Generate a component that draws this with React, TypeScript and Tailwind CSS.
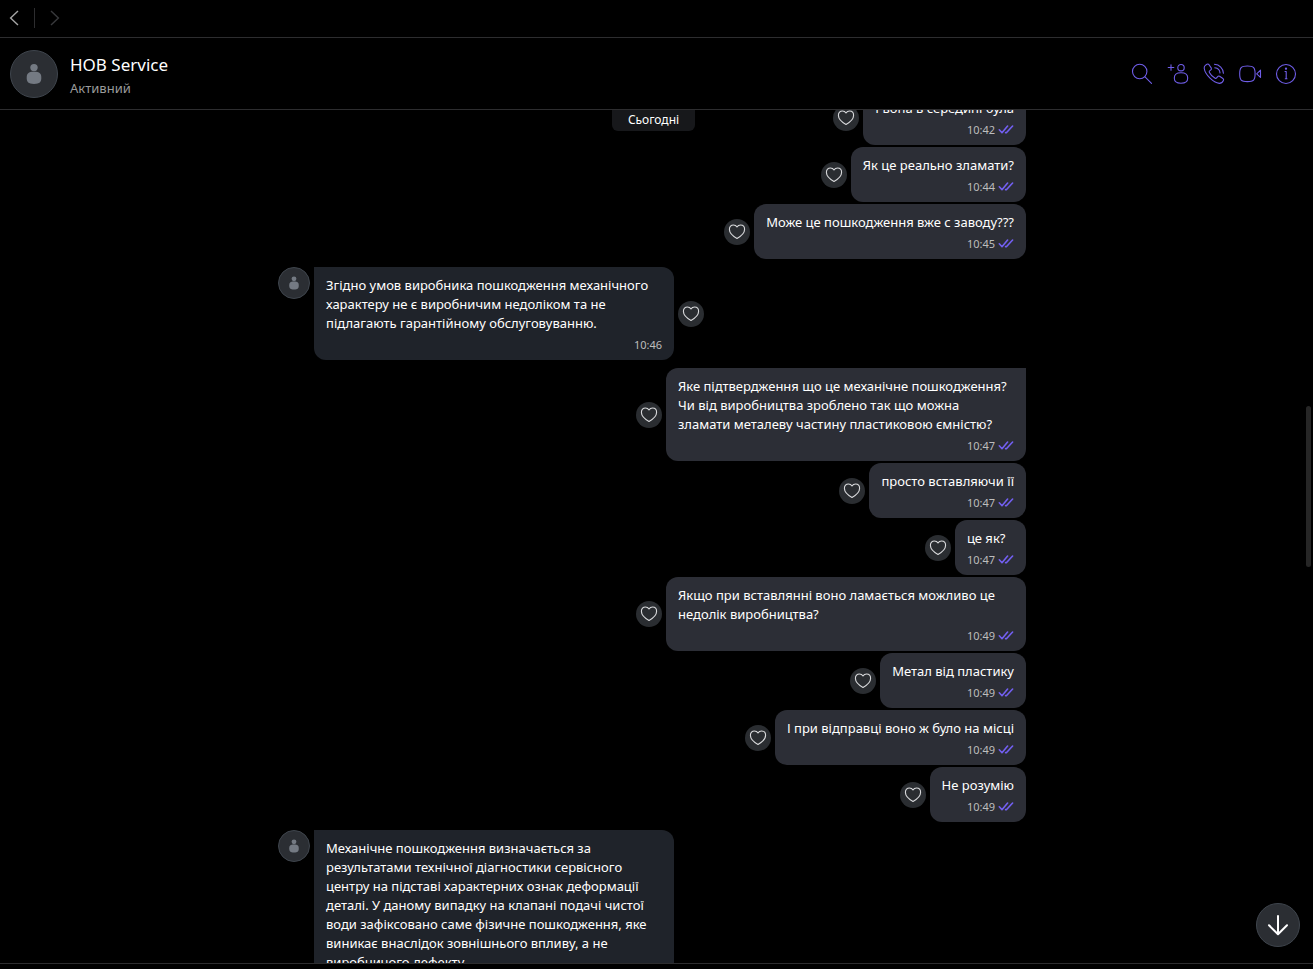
import React from 'react';

type Message = {
  id: number;
  text: string;
  time?: string;
};

type Group = {
  id: number;
  incoming?: boolean;
  tail?: boolean;
  messages: Message[];
};

const groups: Group[] = [
  {
    id: 1,
    messages: [
      { id: 1, text: 'І вона в середині була', time: '10:42' },
      { id: 2, text: 'Як це реально зламати?', time: '10:44' },
      { id: 3, text: 'Може це пошкодження вже с заводу???', time: '10:45' },
    ],
  },
  {
    id: 2,
    incoming: true,
    tail: true,
    messages: [
      {
        id: 4,
        text: 'Згідно умов виробника пошкодження механічного\nхарактеру не є виробничим недоліком та не\nпідлагають гарантійному обслуговуванню.',
        time: '10:46',
      },
    ],
  },
  {
    id: 3,
    tail: true,
    messages: [
      {
        id: 5,
        text: 'Яке підтвердження що це механічне пошкодження?\nЧи від виробництва зроблено так що можна\nзламати металеву частину пластиковою ємністю?',
        time: '10:47',
      },
      { id: 6, text: 'просто вставляючи її', time: '10:47' },
      { id: 7, text: 'це як?', time: '10:47' },
      { id: 8, text: 'Якщо при вставлянні воно ламається можливо це\nнедолік виробництва?', time: '10:49' },
      { id: 9, text: 'Метал від пластику', time: '10:49' },
      { id: 10, text: 'І при відправці воно ж було на місці', time: '10:49' },
      { id: 11, text: 'Не розумію', time: '10:49' },
    ],
  },
  {
    id: 4,
    incoming: true,
    tail: true,
    messages: [
      {
        id: 12,
        text: 'Механічне пошкодження визначається за\nрезультатами технічної діагностики сервісного\nцентру на підставі характерних ознак деформації\nдеталі. У даному випадку на клапані подачі чистої\nводи зафіксовано саме фізичне пошкодження, яке\nвиникає внаслідок зовнішнього впливу, а не\nвиробничого дефекту.',
      },
    ],
  },
];

function Avatar({ className }: { className: string }) {
  return (
    <span className={`block shrink-0 rounded-full border border-[#3f454d] bg-[#2b2e33] ${className}`}>
      <svg viewBox="1 1 46 46" className="h-full w-full" fill="#747a83" aria-hidden="true">
        <circle cx="24" cy="17.6" r="3.7" />
        <path d="M24 21.8c5.800 0 7.300 1.700 7.300 6S29.800 34 24 34s-7.300-1.900-7.300-6.200 1.500-6 7.300-6z" />
      </svg>
    </span>
  );
}

function HeartButton() {
  return (
    <button
      type="button"
      aria-label="Подобається"
      className="flex size-[26px] shrink-0 items-center justify-center rounded-full bg-[#2a2d31]"
    >
      <svg width="18" height="18" viewBox="0 0 18 18" fill="none" stroke="#d9dadc" strokeWidth="1.1" strokeLinejoin="round">
        <path d="M9 15.500C6.300 14 1.400 10.600 1.400 6.300c0-2.600 1.700-4.300 4-4.300C7 2 8.300 2.800 9 4c.7-1.200 2-2 3.600-2 2.300 0 4 1.700 4 4.300 0 4.300-4.900 7.700-7.600 9.200z" />
      </svg>
    </button>
  );
}

function ReadMark() {
  return (
    <svg width="16" height="10" viewBox="0 0 16 10" fill="none" stroke="#7360f2" strokeWidth="1.6" strokeLinecap="round" strokeLinejoin="round">
      <path d="M1.300 4.800l2.700 2.900L9.600 1" />
      <path d="M7.600 7.600l.8.100L14.600 1" />
    </svg>
  );
}

function Bubble({ message, incoming, tail }: { message: Message; incoming?: boolean; tail?: boolean }) {
  const multiline = message.text.includes('\n');
  const color = incoming ? 'bg-[#1f232a]' : 'bg-[#2c2e36]';
  const corner = !tail ? '' : incoming ? 'rounded-tl-none' : 'rounded-tr-none';

  return (
    <div className={`flex items-center gap-1 ${incoming ? '' : 'flex-row-reverse'}`}>
      <div className={`rounded-xl px-3 pt-[9px] pb-[7px] ${color} ${corner} ${multiline ? 'w-[360px]' : ''}`}>
        <p className="whitespace-pre text-[13px] leading-[19px] text-white">{message.text}</p>
        <div className="mt-1 flex h-4 items-center justify-end gap-[3px] text-[11px] text-[#bdbdbd]">
          {message.time && <time>{message.time}</time>}
          {!incoming && <ReadMark />}
        </div>
      </div>
      {message.time && <HeartButton />}
    </div>
  );
}

function HeaderIcon({ label, children }: { label: string; children: React.ReactNode }) {
  return (
    <button type="button" aria-label={label} className="size-6">
      <svg width="24" height="24" viewBox="0 0 24 24" fill="none" stroke="#6f5de8" strokeWidth="1.1" strokeLinecap="round" strokeLinejoin="round">
        {children}
      </svg>
    </button>
  );
}

export default function App() {
  return (
    <div className="flex h-screen flex-col bg-black font-['Noto_Sans','Open_Sans',sans-serif] text-white">
      <nav className="flex h-[38px] shrink-0 items-center border-b border-[#2d2d2f] pb-px pl-[6px]">
        <button type="button" aria-label="Назад" className="text-[#a5a5a5]">
          <svg width="16" height="16" viewBox="0 0 16 16" fill="none" stroke="currentColor" strokeWidth="1.4">
            <path d="M12 1L4.600 8l7.400 7" />
          </svg>
        </button>
        <span className="mx-3 h-5 w-px bg-[#2d2d2f]" />
        <button type="button" aria-label="Вперед" disabled className="text-[#38393c]">
          <svg width="16" height="16" viewBox="0 0 16 16" fill="none" stroke="currentColor" strokeWidth="1.4">
            <path d="M4 1l7.400 7L4 15" />
          </svg>
        </button>
      </nav>

      <header className="flex h-[72px] shrink-0 items-center gap-3 border-b border-[#2d2d2f] pr-[15px] pl-[10px]">
        <Avatar className="size-12" />
        <div className="flex-1 pt-[5px]">
          <h1 className="text-[17px] leading-6">HOB Service</h1>
          <p className="text-[13px] leading-[22px] text-[#9b9b9b]">Активний</p>
        </div>
        <div className="flex gap-3">
          <HeaderIcon label="Пошук">
            <circle cx="9.7" cy="9.5" r="7.2" />
            <path d="M15 14.800l6.500 6.500" />
          </HeaderIcon>
          <HeaderIcon label="Додати учасника">
            <circle cx="15" cy="5.700" r="3.200" />
            <path d="M15 10.800c5 0 6.700 1.400 6.700 5.200s-1.700 5.200-6.700 5.200-6.700-1.400-6.700-5.200 1.700-5.200 6.700-5.200z" />
            <path d="M2.200 5.500h5.600M5 2.700v5.600" />
          </HeaderIcon>
          <HeaderIcon label="Подзвонити">
            <path d="M3.300 3.400L5 2.300c.7-.4 1.500-.2 2 .4l2.200 3.200c.4.700.3 1.400-.3 1.900L7.600 8.900c-.5.400-.5.900-.2 1.500 1.300 2.500 3.200 4.400 5.700 5.800.6.300 1.100.2 1.500-.3l1.100-1.300c.5-.6 1.200-.7 1.900-.3l3.300 2.200c.7.500.9 1.200.5 1.900-.8 1.600-2.200 3-4 3C11.200 20.500 3 12.500 2.200 6.200c-.1-1.200.3-2.200 1.100-2.800z" />
            <path d="M12.500 2.300c5 .3 8.700 4 8.900 8.900M12.800 5.700c3 .3 5 2.300 5.200 5.200" />
          </HeaderIcon>
          <HeaderIcon label="Відеодзвінок">
            <path d="M9.400 4c6.300 0 7.700 1.500 7.700 7.800s-1.400 7.800-7.700 7.800-7.700-1.500-7.700-7.800S3.100 4 9.400 4z" />
            <path d="M18.700 11.800l3.800-3.600v7.200z" />
          </HeaderIcon>
          <HeaderIcon label="Інформація">
            <circle cx="12" cy="12" r="9.5" />
            <path d="M11 9.500h1.200v7.300M11.300 16.800h1.700" />
            <circle cx="12" cy="6.700" r=".6" fill="#6f5de8" />
          </HeaderIcon>
        </div>
      </header>

      <main className="relative flex-1 overflow-hidden pr-[9px]">
        {/* the list is scrolled past the top of its first bubble */}
        <div className="mx-auto -mt-5 flex max-w-[748px] flex-col gap-2">
          {groups.map((group) => (
            <section key={group.id} className="flex gap-1">
              {group.incoming && <Avatar className="size-8" />}
              <div className="flex flex-1 flex-col gap-0.5">
                {group.messages.map((message, i) => (
                  <Bubble
                    key={message.id}
                    message={message}
                    incoming={group.incoming}
                    tail={group.tail && i === 0}
                  />
                ))}
              </div>
            </section>
          ))}
        </div>

        <div className="absolute inset-x-0 top-0 flex justify-center pr-[6px]">
          <span className="rounded-b-md bg-[#17181b] px-4 pt-px pb-0.5 text-[12px] leading-[18px]">Сьогодні</span>
        </div>

        <button
          type="button"
          aria-label="До останніх повідомлень"
          className="absolute right-[13px] bottom-4 flex size-11 items-center justify-center rounded-full border border-[#3f454d] bg-[#2b2e33]"
        >
          <svg width="22" height="22" viewBox="0 0 22 22" fill="none" stroke="#fff" strokeWidth="2" strokeLinecap="round" strokeLinejoin="round">
            <path d="M11 2v18M2 11.300l9 8.900 9-8.900" />
          </svg>
        </button>
        <div className="absolute top-[296px] right-[2px] h-[161px] w-[5px] rounded-full bg-[#262626]" />
      </main>
      <footer className="h-[6px] shrink-0 border-t border-[#2d2d2f]" />
    </div>
  );
}
